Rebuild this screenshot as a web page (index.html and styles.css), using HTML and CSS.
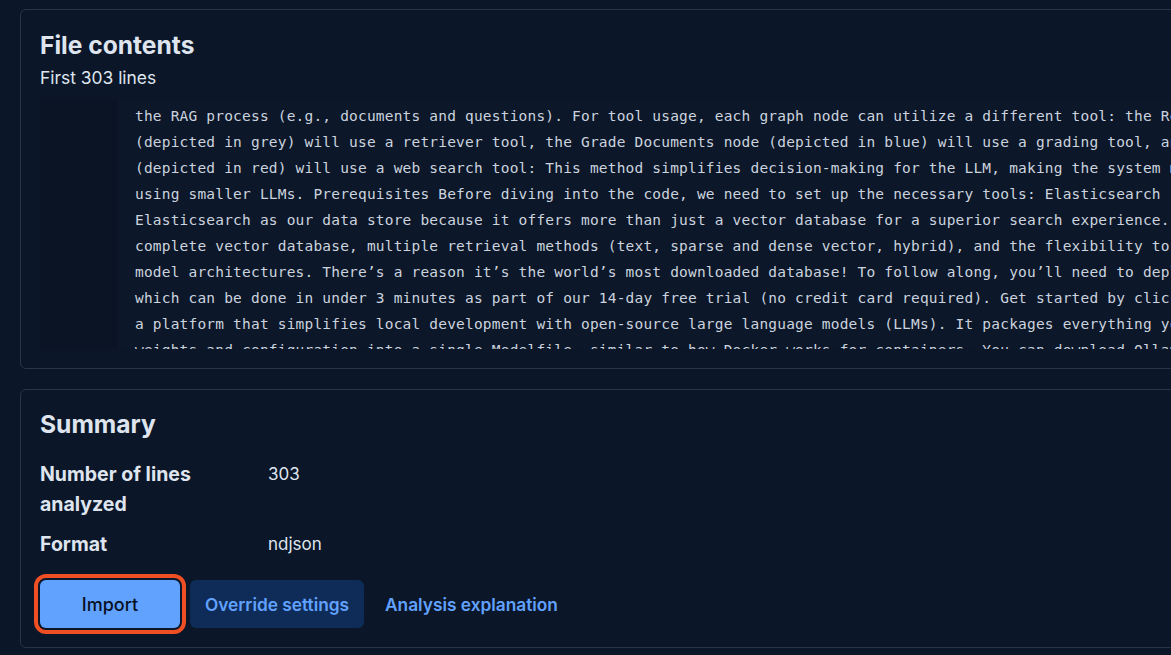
FILE: index.html
```html
<!DOCTYPE html>
<html lang="en">
<head>
<meta charset="utf-8">
<title>File contents</title>
<link rel="stylesheet" href="styles.css">
</head>
<body>
<main class="page">
  <section class="panel">
    <h2 class="panel-title">File contents</h2>
    <p class="panel-sub">First 303 lines</p>
    <div class="code-block">
      <div class="code-gutter"></div>
      <pre class="code-text">the RAG process (e.g., documents and questions). For tool usage, each graph node can utilize a different tool: the Retrieve node
(depicted in grey) will use a retriever tool, the Grade Documents node (depicted in blue) will use a grading tool, and the Web Search node
(depicted in red) will use a web search tool: This method simplifies decision-making for the LLM, making the system more accessible even when
using smaller LLMs. Prerequisites Before diving into the code, we need to set up the necessary tools: Elasticsearch
Elasticsearch as our data store because it offers more than just a vector database for a superior search experience. It provides a
complete vector database, multiple retrieval methods (text, sparse and dense vector, hybrid), and the flexibility to choose your machine learning
model architectures. There’s a reason it’s the world’s most downloaded database! To follow along, you’ll need to deploy an Elasticsearch Cloud cluster,
which can be done in under 3 minutes as part of our 14-day free trial (no credit card required). Get started by clicking here. Ollama is
a platform that simplifies local development with open-source large language models (LLMs). It packages everything you need to run an LLM
weights and configuration into a single Modelfile, similar to how Docker works for containers. You can download Ollama for your machine
</pre>
    </div>
  </section>

  <section class="panel summary">
    <h2 class="panel-title">Summary</h2>
    <dl class="summary-list">
      <dt>Number of lines analyzed</dt>
      <dd>303</dd>
      <dt>Format</dt>
      <dd>ndjson</dd>
    </dl>
    <div class="actions">
      <button class="btn btn-primary">Import</button>
      <button class="btn btn-secondary">Override settings</button>
      <button class="btn btn-link">Analysis explanation</button>
    </div>
  </section>
</main>
</body>
</html>
```
FILE: styles.css
```css
html, body {
  margin: 0;
  padding: 0;
  background: #0b1628;
  overflow: hidden;
}

body {
  font-family: Inter, "Noto Sans", "Liberation Sans", sans-serif;
  color: #dfe5ef;
}

.page {
  width: 1400px;
  padding: 9px 0 0 20px;
  display: flex;
  flex-direction: column;
  gap: 20px;
}

.panel {
  border: 1px solid #2a3445;
  border-radius: 6px;
  background: #0b1628;
  padding: 19px 19px 19px 19px;
}

.panel-title {
  margin: 0;
  font-size: 24.6px;
  line-height: 32px;
  font-weight: 700;
  color: #dfe5ef;
}

.panel-sub {
  margin: 5px 0 9px;
  font-size: 17.4px;
  line-height: 24px;
  color: #dfe5ef;
}

.code-block {
  display: flex;
  height: 250px;
  overflow: hidden;
  background: #0c1729;
}

.code-gutter {
  width: 78px;
  flex: none;
  background: #0a1424;
}

.code-text {
  margin: 0;
  padding: 4px 0 0 17px;
  font-family: "DejaVu Sans Mono", "Liberation Mono", monospace;
  font-size: 14.5px;
  line-height: 26px;
  letter-spacing: 0.19px;
  color: #cbd3df;
  white-space: pre;
}

.summary {
  padding-top: 18px;
  padding-bottom: 19px;
}

.summary-list {
  display: grid;
  grid-template-columns: 200px 1fr;
  column-gap: 28px;
  row-gap: 10px;
  margin: 19px 0 21px;
}

.summary-list dt {
  font-size: 19.5px;
  line-height: 30px;
  font-weight: 700;
  color: #dfe5ef;
}

.summary-list dd {
  margin: 0;
  font-size: 17px;
  line-height: 30px;
  color: #dfe5ef;
}

.actions {
  display: flex;
  align-items: center;
  gap: 10px;
}

.btn {
  height: 48px;
  border: none;
  border-radius: 6px;
  font-family: Inter, "Noto Sans", "Liberation Sans", sans-serif;
  font-size: 17.3px;
  font-weight: 500;
  padding: 0 15px;
  cursor: pointer;
}

.btn-primary {
  width: 140px;
  font-size: 18px;
  background: #61a2ff;
  color: #07101f;
  outline: 4px solid #f04e23;
  outline-offset: 2px;
}

.btn-secondary {
  background: #0f2c59;
  color: #61a2ff;
  font-weight: 600;
}

.btn-link {
  background: transparent;
  color: #61a2ff;
  font-weight: 600;
  padding: 0 11px;
}
```
